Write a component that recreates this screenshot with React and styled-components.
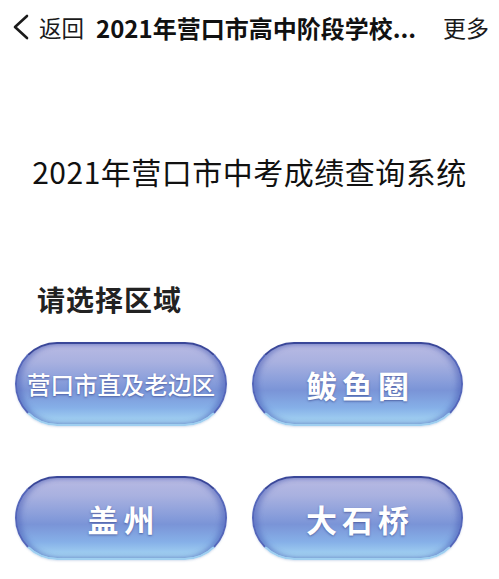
import React from "react";
import styled, { createGlobalStyle } from "styled-components";

const Global = createGlobalStyle`
  html, body { margin: 0; padding: 0; background: #fff; }
  body { font-family: "Noto Sans CJK SC", "Noto Sans", sans-serif; color: #111; }
  * { box-sizing: border-box; }
`;

const Page = styled.div`
  width: 499px;
  height: 579px;
  overflow: hidden;
  background: #fff;
`;

const NavBar = styled.div`
  height: 54px;
  display: flex;
  align-items: center;
  padding: 0 10px 0 12px;
`;

const Back = styled.div`
  display: flex;
  align-items: center;
  gap: 10px;
  font-size: 22.5px;
  color: #1a1a1a;
  flex: none;
`;

const NavTitle = styled.div`
  flex: 1;
  margin-left: 12px;
  font-size: 24px;
  font-weight: 600;
  color: #111;
  white-space: nowrap;
  overflow: hidden;
  letter-spacing: 0px;
`;

const More = styled.div`
  font-size: 23px;
  color: #1a1a1a;
  flex: none;
`;

const Heading = styled.h1`
  margin: 99px 0 0;
  font-size: 30px;
  font-weight: 400;
  line-height: 36px;
  text-align: center;
  color: #111;
  letter-spacing: 0.5px;
`;

const Label = styled.h2`
  margin: 93px 0 0;
  padding-left: 37px;
  font-size: 28px;
  font-weight: 700;
  line-height: 34px;
  color: #222;
  letter-spacing: 1px;
`;

const Grid = styled.div`
  margin-top: 26px;
  padding-left: 15px;
  display: grid;
  grid-template-columns: 212px 211px;
  column-gap: 25px;
  row-gap: 50px;
`;

const AreaButton = styled.button`
  height: 84px;
  border-radius: 42px;
  border: 2px solid;
  border-color: #3a4799 #5466ba #9fcff0 #5466ba;
  background: linear-gradient(
    to bottom,
    #b8bae3 0%,
    #a9b1e0 22%,
    #8b9fdb 45%,
    #7a94d7 58%,
    #86b0e8 80%,
    #a8d9f4 100%
  );
  box-shadow: inset 4px 0 5px rgba(70, 90, 180, 0.45),
    inset -4px 0 5px rgba(70, 90, 180, 0.45),
    0 1px 2px rgba(120, 150, 200, 0.3);
  color: #fff;
  font-family: "Noto Sans CJK SC", "Noto Sans", sans-serif;
  font-size: ${(p) => (p.$small ? "23.5px" : "31px")};
  font-weight: ${(p) => (p.$small ? 500 : 700)};
  letter-spacing: ${(p) => (p.$small ? "0px" : "5px")};
  text-indent: ${(p) => (p.$small ? "0px" : "5px")};
  text-shadow: 0 1px 2px rgba(40, 50, 120, 0.55);
  display: flex;
  align-items: center;
  justify-content: center;
  padding: 0;
  white-space: nowrap;
  cursor: pointer;
`;

const Chevron = () => (
  <svg width="17" height="26" viewBox="0 0 17 26">
    <path d="M15 2 L3 13 L15 24" fill="none" stroke="#1a1a1a" strokeWidth="2.6" strokeLinecap="round" strokeLinejoin="round" />
  </svg>
);

export default function App() {
  return (
    <Page>
      <Global />
      <NavBar>
        <Back>
          <Chevron />
          <span>返回</span>
        </Back>
        <NavTitle>2021年营口市高中阶段学校...</NavTitle>
        <More>更多</More>
      </NavBar>
      <Heading>2021年营口市中考成绩查询系统</Heading>
      <Label>请选择区域</Label>
      <Grid>
        <AreaButton $small>营口市直及老边区</AreaButton>
        <AreaButton>鲅鱼圈</AreaButton>
        <AreaButton>盖州</AreaButton>
        <AreaButton>大石桥</AreaButton>
      </Grid>
    </Page>
  );
}
